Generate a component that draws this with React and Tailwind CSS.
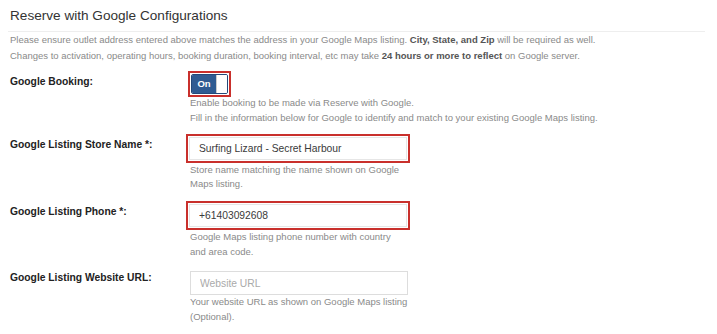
import React from 'react';

const Help = ({ children, className = '' }) => (
  <p className={`text-[9.5px] text-[#8a8a8a] ${className}`}>{children}</p>
);

const Label = ({ children, className = '' }) => (
  <div className={`w-[180px] shrink-0 text-[10.3px] leading-[14px] font-bold text-[#222] ${className}`}>{children}</div>
);

const FlaggedInput = ({ value }) => (
  <div className="-ml-[4px] w-[224px] border-2 border-[#c9302c] p-px">
    <input
      readOnly
      value={value}
      className="block h-[23px] w-full border border-[#e6e6e6] bg-white px-[9px] text-[10.3px] text-[#3a3a3a] outline-none"
    />
  </div>
);

export default function App() {
  return (
    <div className="min-h-screen bg-white pl-[10px] pt-[6px] font-['Liberation_Sans',Arial,sans-serif]">
      <h2 className="pb-[5px] text-[13.6px] leading-[20px] text-[#333]">Reserve with Google Configurations</h2>
      <div className="mr-[12px] -ml-[2px] border-t border-[#eee]" />
      <div className="text-[9.5px] leading-[16px] text-[#8a8a8a]">
        <p>
          Please ensure outlet address entered above matches the address in your Google Maps listing.{' '}
          <b className="text-[#555]">City, State, and Zip</b> will be required as well.
        </p>
        <p>
          Changes to activation, operating hours, booking duration, booking interval, etc may take{' '}
          <b className="text-[#555]">24 hours or more to reflect</b> on Google server.
        </p>
      </div>

      <div className="mt-[6px] flex">
        <Label className="pt-[5px]">Google Booking:</Label>
        <div>
          <div className="-ml-[2px] inline-flex border-2 border-[#c9302c] p-px">
            <div className="flex h-[20px] items-center overflow-hidden rounded-[2px] border border-[#24497a]">
              <span className="flex h-full w-[24px] items-center justify-center bg-[#2f5b92] text-[9.5px] font-bold text-white">
                On
              </span>
              <span className="h-full w-[11px] border-l border-[#ccc] bg-white" />
            </div>
          </div>
          <Help className="-mt-[2px] leading-[15px]">
            Enable booking to be made via Reserve with Google.
            <br />
            Fill in the information below for Google to identify and match to your existing Google Maps listing.
          </Help>
        </div>
      </div>

      <div className="mt-[9px] flex">
        <Label className="pt-[4px]">Google Listing Store Name *:</Label>
        <div>
          <FlaggedInput value="Surfing Lizard - Secret Harbour" />
          <Help className="w-[216px] leading-[14px]">Store name matching the name shown on Google Maps listing.</Help>
        </div>
      </div>

      <div className="mt-[10px] flex">
        <Label className="pt-[4px]">Google Listing Phone *:</Label>
        <div>
          <FlaggedInput value="+61403092608" />
          <Help className="w-[216px] leading-[14.5px]">Google Maps listing phone number with country and area code.</Help>
        </div>
      </div>

      <div className="mt-[12px] flex">
        <Label>Google Listing Website URL:</Label>
        <div>
          <input
            placeholder="Website URL"
            className="block h-[24px] w-[218px] border border-[#ddd] bg-white px-[9px] text-[10.3px] text-[#333] outline-none placeholder:text-[#aaa]"
          />
          <Help className="w-[226px] leading-[14.5px]">Your website URL as shown on Google Maps listing (Optional).</Help>
        </div>
      </div>
    </div>
  );
}
